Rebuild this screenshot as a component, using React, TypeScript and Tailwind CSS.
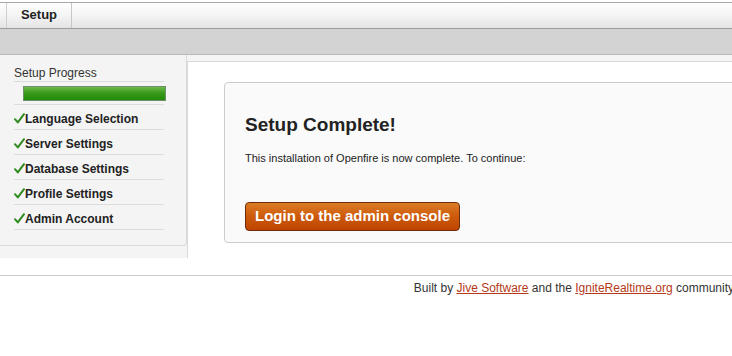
const STEPS = [
  "Language Selection",
  "Server Settings",
  "Database Settings",
  "Profile Settings",
  "Admin Account",
];

function Check() {
  return (
    <svg width="11" height="11" viewBox="0 0 11 11" className="shrink-0">
      <path d="M1 6.2 L3.8 9.4 L10 1.2" fill="none" stroke="#2f8a1f" strokeWidth="2" strokeLinecap="round" strokeLinejoin="round" />
    </svg>
  );
}

function Sidebar() {
  return (
    <div className="w-[192px] h-[203px] shrink-0 bg-[#f4f4f4]">
      <div className="w-[187px] h-[191px] border-r border-b border-[#dadada] rounded-br-[4px] pt-[10px] pl-[14px]">
        <div className="w-[150px] h-[17px] border-b border-[#dcdcdc] text-[12px] leading-[17px] text-[#333]">
          Setup Progress
        </div>
        <div className="w-[150px] h-[23px] border-b border-[#dcdcdc] pt-[4px] pl-[9px]">
          <div className="w-[143px] h-[15px] border border-[#6f8f6a] bg-[linear-gradient(to_bottom,#6dbb4c,#3a9a1c_45%,#228a08)]" />
        </div>
        <ul>
          {STEPS.map((s) => (
            <li
              key={s}
              className="w-[150px] h-[25px] border-b border-[#dcdcdc] flex items-center pt-[3px] text-[12px] font-bold text-[#222]"
            >
              <Check />
              {s}
            </li>
          ))}
        </ul>
      </div>
    </div>
  );
}

export default function App() {
  return (
    <div className="w-[732px] h-[356px] overflow-hidden bg-white font-['Liberation_Sans',Arial,sans-serif]">
      <div className="w-[760px]">
        {/* tab bar */}
        <div className="mt-[2px] h-[27px] border-t border-b border-t-[#a8a8a8] border-b-[#9c9c9c] bg-[linear-gradient(to_bottom,#fefefe,#f4f4f4_50%,#e4e4e4)] pl-[6px] flex">
          <div className="w-[66px] h-full border-l border-r border-l-[#cfcfcf] border-r-[#c8c8c8] flex items-center justify-center text-[13px] font-bold text-[#222] pb-[1px]">
            Setup
          </div>
        </div>
        {/* grey band */}
        <div className="h-[26px] bg-[#d3d3d3] border-b border-[#b9b9b9]" />

        <div className="flex items-start">
          <Sidebar />
          <div className="flex-1 -ml-[5px] bg-[#f4f4f4] pt-[6px]">
            <div className="bg-white border-t border-l border-[#dadada] pt-[20px] pl-[36px] h-[197px]">
              <div className="h-[161px] border border-[#cdcdcd] rounded-[4px] bg-[#fafafa] pt-[31px] pl-[20px]">
                <h1 className="text-[19px] leading-[22px] font-bold text-[#222]">Setup Complete!</h1>
                <p className="mt-[14px] text-[11px] leading-[16px] text-[#222]">
                  This installation of Openfire is now complete. To continue:
                </p>
                <button
                  type="button"
                  className="mt-[36px] w-[215px] h-[29px] rounded-[4px] border border-[#6a2c0c] bg-[linear-gradient(to_bottom,#dc7c26,#cc5a0c_50%,#c04400)] text-white text-[15px] font-bold pb-[1px]"
                >
                  Login to the admin console
                </button>
              </div>
            </div>
          </div>
        </div>

        {/* footer */}
        <div className="mt-[17px] border-t border-[#cccccc] pt-[4px] pr-[26px] text-right text-[12px] leading-[16px] text-[#333]">
          Built by{" "}
          <a href="#" className="text-[#b5391a] underline">
            Jive Software
          </a>{" "}
          and the{" "}
          <a href="#" className="text-[#b5391a] underline">
            IgniteRealtime.org
          </a>{" "}
          community
        </div>
      </div>
    </div>
  );
}
